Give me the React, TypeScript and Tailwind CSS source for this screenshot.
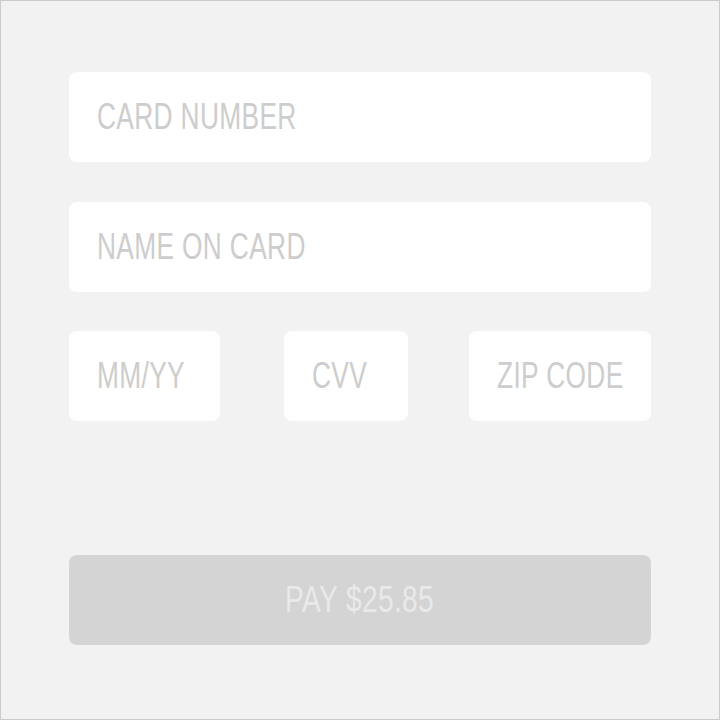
import React from "react";

const font = { fontFamily: '"Liberation Sans", Arial, sans-serif' };

function Field({ placeholder, className }: { placeholder: string; className: string }) {
  return (
    <div
      role="textbox"
      aria-placeholder={placeholder}
      className={`flex h-[90px] items-center overflow-hidden rounded-lg bg-white px-[28px] ${className}`}
    >
      <span
        style={font}
        className="inline-block origin-left scale-x-[0.73] whitespace-nowrap text-[36px] leading-none tracking-[0.5px] text-[#cdcdcd]"
      >
        {placeholder}
      </span>
    </div>
  );
}

export default function App() {
  return (
    <div className="box-border h-[720px] w-[720px] border border-[#cbcbcb] bg-[#f2f2f2] px-[68px] pt-[71px]">
      <div className="flex flex-col">
        <Field placeholder="CARD NUMBER" className="w-full" />
        <Field placeholder="NAME ON CARD" className="mt-[40px] w-full" />
        <div className="mt-[39px] flex">
          <Field placeholder="MM/YY" className="w-[151px]" />
          <Field placeholder="CVV" className="ml-[64px] w-[124px]" />
          <Field placeholder="ZIP CODE" className="ml-[61px] w-[182px]" />
        </div>
        <button className="mt-[134px] flex h-[90px] w-full items-center justify-center rounded-lg bg-[#d4d4d4]">
          <span
            style={font}
            className="inline-block origin-center scale-x-[0.78] whitespace-nowrap text-[36px] leading-none tracking-[0.5px] text-[#e9e9e9]"
          >
            PAY $25.85
          </span>
        </button>
      </div>
    </div>
  );
}
